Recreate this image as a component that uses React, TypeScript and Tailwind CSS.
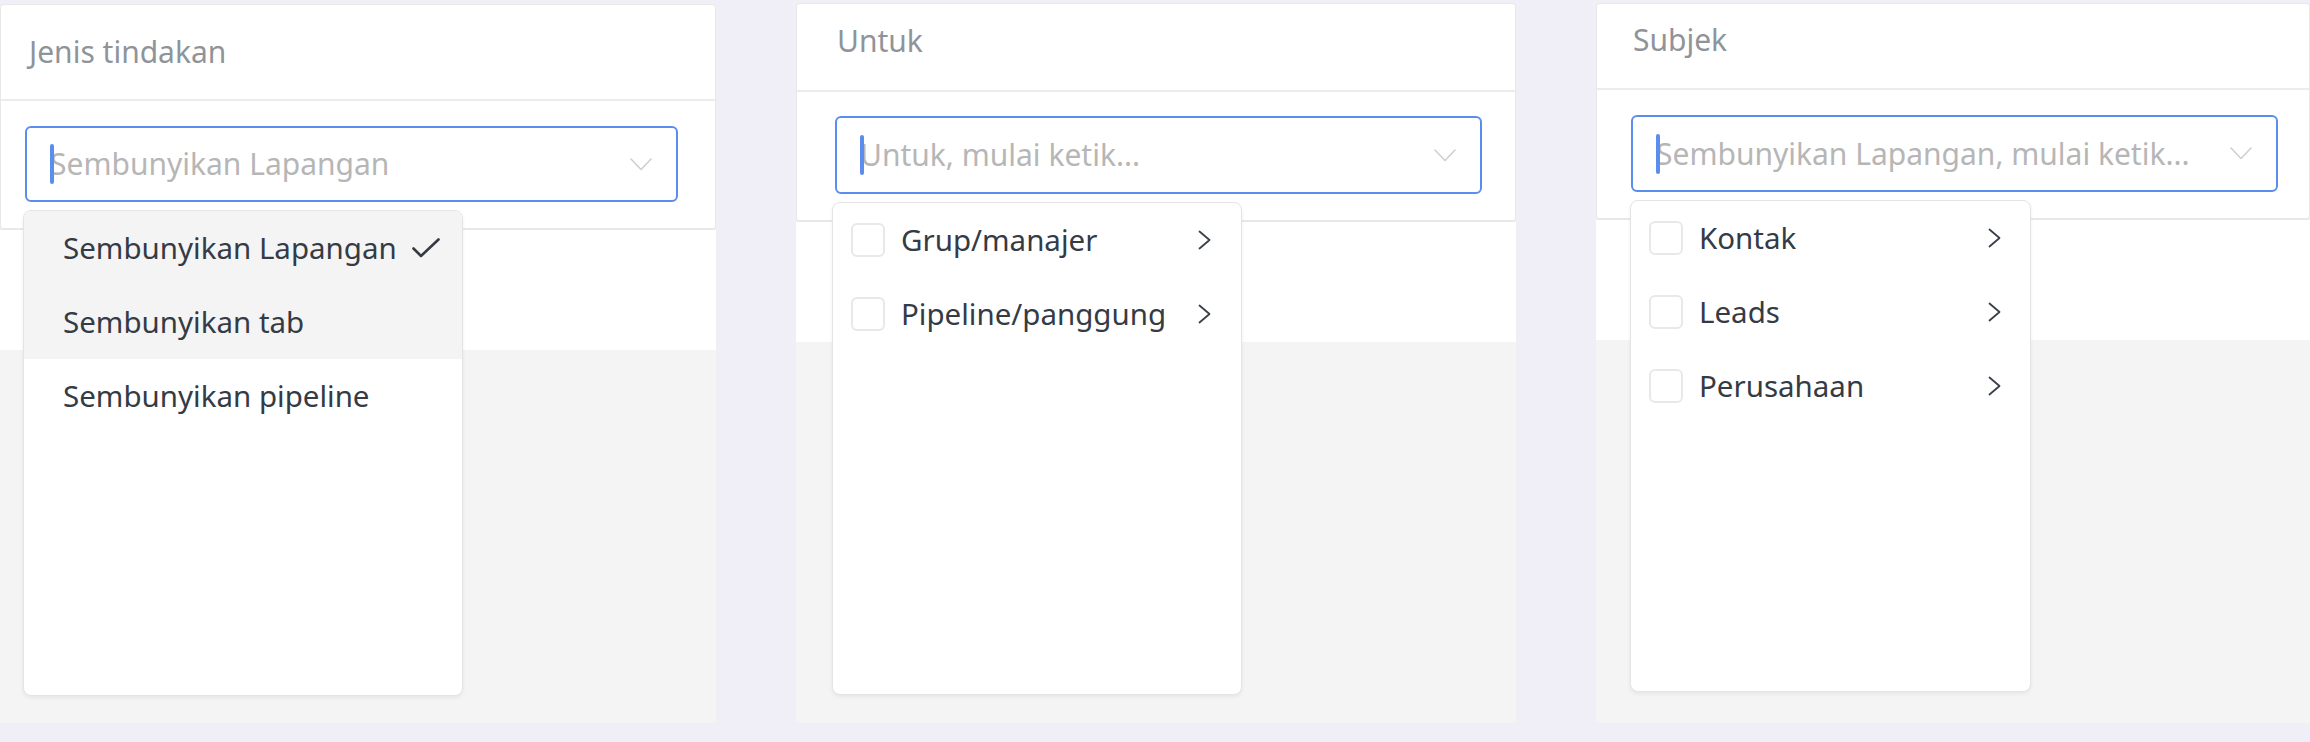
import React from "react";

type Item = { label: string; active?: boolean; checked?: boolean };

type Panel = {
  title: string;
  placeholder: string;
  kind: "select" | "tree";
  items: Item[];
  wrap: string;
  head: string;
  body: string;
  input: string;
  menu: string;
  row: string;
};

const panels: Panel[] = [
  {
    title: "Jenis tindakan",
    placeholder: "Sembunyikan Lapangan",
    kind: "select",
    items: [
      { label: "Sembunyikan Lapangan", active: true, checked: true },
      { label: "Sembunyikan tab", active: true },
      { label: "Sembunyikan pipeline" },
    ],
    wrap: "w-[716px] pt-[4px]",
    head: "h-[96px] pt-[27px] pl-[28px]",
    body: "pt-[25px] pb-[26px] pl-[24px] pr-[37px]",
    input: "h-[76px]",
    menu: "left-[-4px] top-[calc(100%+10px)] w-[440px] h-[486px]",
    row: "pl-[39px] pr-[22px]",
  },
  {
    title: "Untuk",
    placeholder: "Untuk, mulai ketik...",
    kind: "tree",
    items: [{ label: "Grup/manajer" }, { label: "Pipeline/panggung" }],
    wrap: "w-[720px] pt-[3px]",
    head: "h-[88px] pt-[17px] pl-[40px]",
    body: "pt-[24px] pb-[26px] pl-[38px] pr-[33px]",
    input: "h-[78px]",
    menu: "left-[-5px] top-[calc(100%+10px)] w-[410px] h-[493px]",
    row: "pl-[18px] pr-[30px]",
  },
  {
    title: "Subjek",
    placeholder: "Sembunyikan Lapangan, mulai ketik...",
    kind: "tree",
    items: [{ label: "Kontak" }, { label: "Leads" }, { label: "Perusahaan" }],
    wrap: "flex-1 pt-[3px]",
    head: "h-[86px] pt-[16px] pl-[36px]",
    body: "pt-[25px] pb-[26px] pl-[34px] pr-[31px]",
    input: "h-[77px]",
    menu: "left-[-3px] top-[calc(100%+10px)] w-[401px] h-[492px]",
    row: "pl-[18px] pr-[29px]",
  },
];

function ChevronDown() {
  return (
    <svg width="22" height="13" viewBox="0 0 22 13" fill="none" className="shrink-0">
      <path d="M1 1L11 11.5L21 1" stroke="#cfcfcf" strokeWidth="1.6" strokeLinecap="round" strokeLinejoin="round" />
    </svg>
  );
}

function ChevronRight() {
  return (
    <svg width="13" height="20" viewBox="0 0 13 20" fill="none" className="shrink-0">
      <path d="M1.5 1.5L11.5 10L1.5 18.5" stroke="#3a4049" strokeWidth="1.8" strokeLinecap="round" strokeLinejoin="round" />
    </svg>
  );
}

function Check() {
  return (
    <svg width="28" height="20" viewBox="0 0 28 20" fill="none" className="shrink-0">
      <path d="M1.5 10.5L9 18L26.5 1.5" stroke="#363b43" strokeWidth="2.6" strokeLinecap="round" strokeLinejoin="round" />
    </svg>
  );
}

function Menu({ p }: { p: Panel }) {
  return (
    <div
      className={`absolute z-10 overflow-hidden bg-white border border-[#e4e4e4] rounded-[8px] shadow-[0_2px_4px_rgba(0,0,0,0.06)] text-[29.5px] text-[#343b45] ${p.menu}`}
    >
      {p.items.map((it) =>
        p.kind === "select" ? (
          <div key={it.label} className={`flex items-center h-[74px] ${p.row} ${it.active ? "bg-[#f4f4f4]" : ""}`}>
            <span className="flex-1">{it.label}</span>
            {it.checked && <Check />}
          </div>
        ) : (
          <div key={it.label} className={`flex items-center gap-[16px] h-[74px] ${p.row}`}>
            <span className="w-[34px] h-[34px] shrink-0 border-2 border-[#e8e8e8] rounded-[6px]" />
            <span className="flex-1">{it.label}</span>
            <ChevronRight />
          </div>
        )
      )}
    </div>
  );
}

function FilterPanel({ p }: { p: Panel }) {
  return (
    <div className={`flex flex-col h-full pb-[19px] ${p.wrap}`}>
      <div className="bg-white border border-b-2 border-[#e8e8e8] rounded-[4px]">
        <div className={`text-[#8f9499] border-b-2 border-[#ececec] ${p.head}`}>{p.title}</div>
        <div className={p.body}>
          <div className={`relative flex items-center border-2 border-[#5b8def] rounded-[6px] pl-[23px] pr-[24px] ${p.input}`}>
            <span className="relative z-[1] w-[4px] h-[40px] -mr-[4px] shrink-0 rounded-full bg-[#5b8def]" />
            <span className="flex-1 truncate text-[#b6b6b6]">{p.placeholder}</span>
            <ChevronDown />
            <Menu p={p} />
          </div>
        </div>
      </div>
      <div className="h-[120px] bg-white" />
      <div className="flex-1 bg-[#f4f4f4]" />
    </div>
  );
}

export default function App() {
  return (
    <div className="flex gap-[80px] h-[742px] w-full overflow-hidden bg-[#f0eef7] font-['Noto_Sans',sans-serif] text-[30px] leading-[40px]">
      {panels.map((p) => (
        <FilterPanel key={p.title} p={p} />
      ))}
    </div>
  );
}
